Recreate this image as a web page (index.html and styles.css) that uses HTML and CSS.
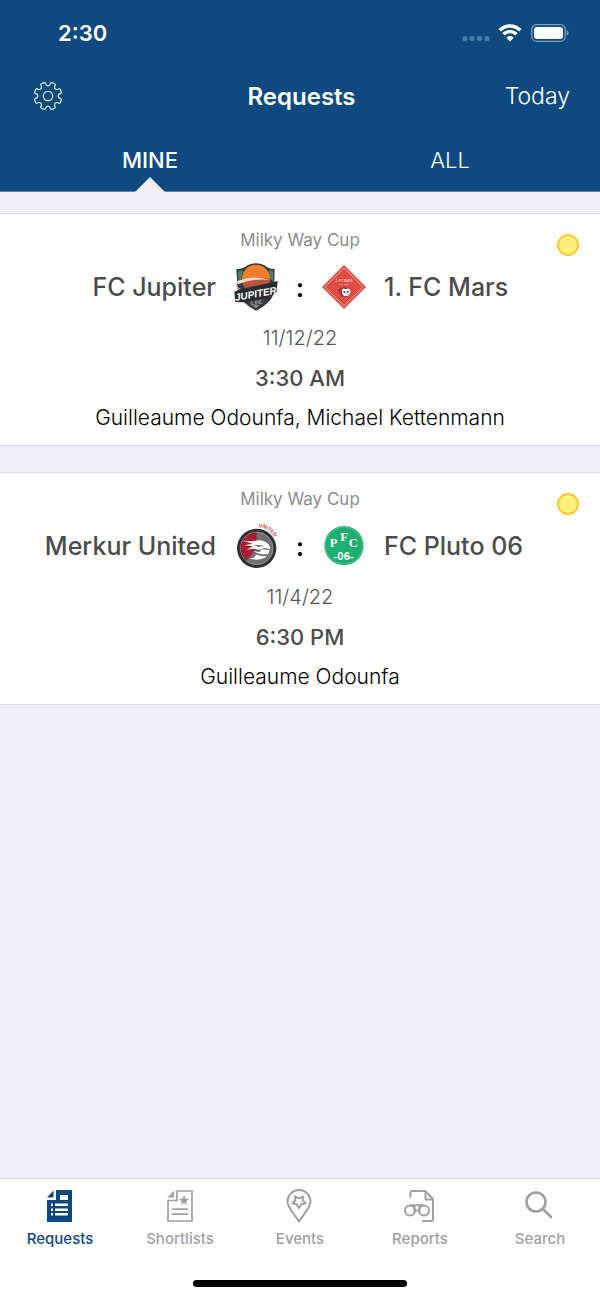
FILE: index.html
```html
<!DOCTYPE html>
<html lang="en">
<head>
<meta charset="UTF-8" />
<meta name="viewport" content="width=device-width, initial-scale=1.0"/>
<title>Requests</title>
<link rel="stylesheet" href="styles.css">
</head>
<body>
<header class="header">
  <div class="status-bar">
    <span class="clock">2:30</span>
    <div class="status-icons">
      <svg class="signal" width="28" height="20" viewBox="0 0 28 20" fill="#4d7aa6">
        <circle cx="3" cy="15.500" r="2.600"/><circle cx="10" cy="15.500" r="2.600"/><circle cx="17.500" cy="15.500" r="2.600"/><circle cx="25" cy="15.500" r="2.600"/>
      </svg>
      <svg class="wifi" width="24" height="20" viewBox="0 0 24 20" fill="none" stroke="#fff" stroke-width="3.400">
        <path d="M1.700 7.300C7.500 1.500 16.500 1.500 22.300 7.300"/>
        <path d="M5.500 11.300C9.200 7.700 14.800 7.700 18.500 11.300"/>
        <path d="M8.300 14.700C10.400 12.400 13.600 12.400 15.700 14.700L12 18.600Z" fill="#fff" stroke="none"/>
      </svg>
      <svg class="battery" width="38" height="20" viewBox="0 0 38 20">
        <rect x="0.700" y="1.700" width="33.600" height="16.600" rx="5" fill="none" stroke="#7c9dbe" stroke-width="1.300"/>
        <rect x="3" y="4" width="29" height="12" rx="3" fill="#fff"/>
        <path d="M35.700 7.200Q37.600 8 37.600 10T35.700 12.800Z" fill="#7c9dbe"/>
      </svg>
    </div>
  </div>

  <div class="nav-bar">
    <button type="button" class="settings" aria-label="Settings">
      <svg width="30" height="30" viewBox="-15 -15 30 30" fill="none" stroke="#e3f0fb" stroke-width="1.200" stroke-linecap="round">
        <defs><path id="tooth" d="M-2.600 -12.600Q-1.600 -10 0 -10Q1.600 -10 2.600 -12.600Q3.100 -13.700 4.200 -13.300L6.400 -12.400Q7.500 -11.900 7.070 -10.750"/></defs>
        <use href="#tooth"/>
        <use href="#tooth" transform="rotate(45)"/>
        <use href="#tooth" transform="rotate(90)"/>
        <use href="#tooth" transform="rotate(135)"/>
        <use href="#tooth" transform="rotate(180)"/>
        <use href="#tooth" transform="rotate(225)"/>
        <use href="#tooth" transform="rotate(270)"/>
        <use href="#tooth" transform="rotate(315)"/>
        <circle r="4.700"/>
      </svg>
    </button>
    <h1>Requests</h1>
    <button type="button" class="today">Today</button>
  </div>

  <div class="tabs">
    <button type="button" class="tab active">MINE</button>
    <button type="button" class="tab">ALL</button>
  </div>
</header>

<main class="matches">
  <article class="match">
    <span class="dot"></span>
    <p class="cup">Milky Way Cup</p>
    <div class="teams">
      <h2 class="home">FC Jupiter</h2>
      <svg class="logo" viewBox="0 0 132 144">
        <path d="M7 18Q24 20 40 7Q66 -6 92 7Q106 20 122 18L120 92Q106 124 66 143Q28 124 12 92Z" fill="#34383a"/>
        <path d="M12 24L27 22L22 52L12 60ZM104 20L118 24V56L108 48Z" fill="#4f7b66"/>
        <circle cx="66" cy="47" r="42" fill="#ee7d2c"/>
        <path d="M25 52Q64 40 107 47Q107 66 98 74L38 80Q27 66 25 52Z" fill="#b9533f"/>
        <path d="M8 55Q60 34 107 51Q60 44 12 64Z" fill="#f2ddd3"/>
        <path d="M6 61Q14 84 40 80L34 87Q8 90 6 61Z" fill="#9a9a9a"/>
        <path d="M1 86L20 78L110 59L131 54L127 91L109 94L100 106L30 118L4 117Z" fill="#292b2d"/>
        <text x="65" y="103" transform="rotate(-10 65 90)" class="jupiter-name">JUPITER</text>
        <path d="M38 115L96 106Q92 124 66 138Q44 128 38 115Z" fill="#3d3f42"/>
        <text x="67" y="125" transform="rotate(-8 67 120)" class="jupiter-cup">1.FC</text>
        <path d="M56 128L77 125L66 135Z" fill="#999"/>
      </svg>
      <span class="versus">:</span>
      <svg class="logo" viewBox="0 0 132 144">
        <path d="M66 6L132 72L66 138L0 72Z" fill="#d9534a"/>
        <path d="M66 15L123 72L66 129L9 72Z" fill="#dd4b43" stroke="#f1aca0" stroke-width="2.500"/>
        <text x="66" y="56" class="mars-name">1. FC MARS</text>
        <text x="66" y="65" class="mars-year">EST. 1900</text>
        <path d="M48 79L68 72L77 99Q61 106 54 92Z" fill="#a92e2b"/>
        <circle cx="71" cy="87" r="13" fill="#6b2c2b"/>
        <path d="M60 80Q65 74 71 79Q78 73 84 80Q87 87 83 93L78 99H66L61 93Q58 87 60 80Z" fill="#fff"/>
        <circle cx="67" cy="87" r="3" fill="#443131"/><circle cx="77" cy="86" r="3" fill="#443131"/>
        <path d="M70 94L72 90L75 94Z" fill="#443131"/>
      </svg>
      <h2 class="away">1. FC Mars</h2>
    </div>
    <p class="date">11/12/22</p>
    <p class="time">3:30 AM</p>
    <p class="people">Guilleaume Odounfa, Michael Kettenmann</p>
  </article>

  <article class="match">
    <span class="dot"></span>
    <p class="cup">Milky Way Cup</p>
    <div class="teams">
      <h2 class="home">Merkur United</h2>
      <svg class="logo" viewBox="0 0 132 144">
        <defs><path id="united-arc" d="M73 15Q103 17 122 46"/></defs>
        <circle cx="68" cy="79" r="59" fill="#303033"/>
        <circle cx="68" cy="79" r="49" fill="#707074" stroke="#aaa" stroke-width="2"/>
        <path d="M68 31A48 48 0 0 0 37 116L68 79Z" fill="#a51f36"/>
        <path d="M27 56L58 58Q84 49 104 67L110 81L90 78L78 83L58 80L38 83L57 73L31 70L56 65Z" fill="#fff"/>
        <path d="M57 87L77 90L84 82L107 84L102 97L83 97L72 94Z" fill="#fff"/>
        <path d="M66 98L82 102L99 103Q86 113 68 113L46 111L61 106Z" fill="#fff"/>
        <path d="M60 68L92 71L73 76Z" fill="#707074"/>
        <text class="united-name"><textPath href="#united-arc">UNITED</textPath></text>
      </svg>
      <span class="versus">:</span>
      <svg class="logo" viewBox="0 0 132 144">
        <circle cx="66" cy="71" r="59" fill="#22b577"/>
        <circle cx="66" cy="71" r="55" fill="#20ad70" stroke="#62c99d" stroke-width="2"/>
        <text x="35" y="76" class="pluto-letter">P</text>
        <text x="66" y="58" class="pluto-letter">F</text>
        <text x="94" y="76" class="pluto-letter">C</text>
        <text x="65" y="113" class="pluto-year">-06-</text>
      </svg>
      <h2 class="away">FC Pluto 06</h2>
    </div>
    <p class="date">11/4/22</p>
    <p class="time">6:30 PM</p>
    <p class="people">Guilleaume Odounfa</p>
  </article>
</main>

<footer class="footer">
  <nav class="tab-bar">
    <a href="#requests" class="item active">
      <svg width="36" height="36" viewBox="0 0 36 36" fill="currentColor">
        <path fill-rule="evenodd" d="M14 2H30V34H5V12H14ZM18 7V12H26V7ZM9 15.500V18H11V15.500ZM13 15.500V18H26V15.500ZM9 20.500V23H11V20.500ZM13 20.500V23H26V20.500ZM9 25V27.500H11V25ZM13 25V27.500H26V25Z"/>
        <path d="M11.500 2.500V9.500H5Z"/>
      </svg>
      <span>Requests</span>
    </a>
    <a href="#shortlists" class="item">
      <svg width="36" height="36" viewBox="0 0 36 36" fill="none" stroke="currentColor" stroke-width="1.700">
        <path d="M15 3H30V33H6V12.500H15Z"/>
        <path d="M12 2.500V9.500H5.500Z" fill="currentColor" stroke="none"/>
        <path d="M22 7L23.400 10.800L27 11L24.200 13.400L25.200 17L22 15L18.800 17L19.800 13.400L17 11L20.600 10.800Z" fill="currentColor" stroke="none"/>
        <path d="M10 21.200H26M10 26.200H26"/>
      </svg>
      <span>Shortlists</span>
    </a>
    <a href="#events" class="item">
      <svg width="36" height="36" viewBox="0 0 36 36" fill="none" stroke="currentColor" stroke-width="2" stroke-linejoin="round">
        <path d="M17 33.500C13.500 27.500 5.500 20 5.500 13.500A11.500 11.500 0 0 1 28.500 13.500C28.500 20 20.500 27.500 17 33.500Z"/>
        <path d="M13 8.500L17 10.300L21 8.500L20.700 12.600L23.600 15.200L19.500 16.200L17 20L14.500 16.200L10.400 15.200L13.300 12.600Z"/>
      </svg>
      <span>Events</span>
    </a>
    <a href="#reports" class="item">
      <svg width="36" height="36" viewBox="0 0 36 36" fill="none" stroke="currentColor" stroke-width="2" stroke-linejoin="round" stroke-linecap="round">
        <path d="M8.500 9V4.500Q8.500 3 10 3H23L31 11V31Q31 33 29 33H21"/>
        <path d="M23.500 3.500V11.500H30.500"/>
        <circle cx="8" cy="22.500" r="5"/><circle cx="22" cy="22.500" r="5"/>
        <path d="M8.500 17.500Q10.500 16.500 12.500 18Q15 15.500 17.500 18Q19.500 16.500 21.500 17.500M12.500 18V24M17.500 18V24M13 22.500H17"/>
      </svg>
      <span>Reports</span>
    </a>
    <a href="#search" class="item">
      <svg width="36" height="36" viewBox="0 0 36 36" fill="none" stroke="currentColor" stroke-width="2.600" stroke-linecap="round">
        <circle cx="14" cy="14" r="9.500"/>
        <path d="M21 21L29 29"/>
      </svg>
      <span>Search</span>
    </a>
  </nav>
  <div class="home-indicator"></div>
</footer>
</body>
</html>
```

FILE: styles.css
```css
* { margin: 0; padding: 0; box-sizing: border-box; }
body {
  min-height: 100vh;
  display: flex;
  flex-direction: column;
  background: #f0eff5;
  color: #000;
  font-family: Inter, "Liberation Sans", sans-serif;
}
button {
  border: none;
  background: none;
  color: inherit;
  font-family: inherit;
  cursor: pointer;
}
svg { display: block; }

/* header */
.header {
  background: #0e4a80;
  color: #fff;
  border-bottom: 1px solid #4c86b8;
}
.status-bar {
  height: 66px;
  padding: 0 31px 0 58px;
  display: flex;
  align-items: center;
  justify-content: space-between;
}
.clock { font-size: 22px; font-weight: 600; }
.status-icons { display: flex; align-items: center; }
.signal { margin-right: 8px; }
.wifi { margin-right: 9px; }

.nav-bar {
  height: 60px;
  padding: 0 30px 0 33px;
  display: grid;
  grid-template-columns: 1fr auto 1fr;
  align-items: center;
}
.settings { justify-self: start; }
.nav-bar h1 { font-size: 24px; font-weight: 600; }
.today { justify-self: end; font-size: 23px; font-weight: 300; }

.tabs { display: grid; grid-template-columns: 1fr 1fr; }
.tab {
  position: relative;
  height: 65px;
  padding-top: 2px;
  font-size: 22px;
  font-weight: 300;
}
.tab.active { font-weight: 500; }
.tab.active::after {
  content: "";
  position: absolute;
  left: 50%;
  bottom: -1px;
  margin-left: -15px;
  border: 15px solid transparent;
  border-top: none;
  border-bottom-color: #f0eff5;
}

/* matches */
.matches {
  flex: 1;
  padding-top: 21px;
  display: flex;
  flex-direction: column;
  gap: 26px;
}
.match {
  position: relative;
  padding: 14px 16px 13px;
  background: #fff;
  border-top: 1px solid #dcdce1;
  border-bottom: 1px solid #dcdce1;
  text-align: center;
}
.dot {
  position: absolute;
  top: 20px;
  right: 21px;
  width: 22px;
  height: 22px;
  border: 2px solid #fac934;
  border-radius: 50%;
  background: #fff07e;
}
.cup { color: #8c8c8c; font-size: 17px; font-weight: 400; line-height: 24px; }
.teams {
  display: grid;
  grid-template-columns: 1fr 44px 44px 44px 1fr;
  align-items: center;
  margin: 11px 0 13px;
}
.teams h2 { color: #4c4c4c; font-size: 25px; font-weight: 500; }
.home { padding-right: 18px; text-align: right; }
.away { padding-left: 18px; text-align: left; }
.logo { width: 44px; height: 48px; }
.versus { font-size: 26px; font-weight: 600; }
.date { color: #555; font-size: 20px; font-weight: 300; line-height: 28px; }
.time { margin: 12px 0; color: #4c4c4c; font-size: 22px; font-weight: 500; line-height: 28px; }
.people { font-size: 21px; font-weight: 300; line-height: 28px; }

/* club logos */
.logo text { fill: #fff; text-anchor: middle; font-family: "Liberation Sans", sans-serif; font-weight: bold; }
.logo .jupiter-name { font-size: 30px; font-style: italic; }
.logo .jupiter-cup { fill: #bbb; font-size: 16px; }
.logo .mars-name { font-size: 9px; fill: #f6c9be; }
.logo .mars-year { font-size: 6px; fill: #f6c9be; }
.logo .united-name { fill: #dc3b55; font-size: 16px; text-anchor: start; }
.logo .pluto-letter { font-family: "Liberation Serif", serif; font-size: 38px; }
.logo .pluto-year { font-size: 34px; }

/* bottom bar */
.footer {
  height: 121px;
  padding-bottom: 12px;
  display: flex;
  flex-direction: column;
  justify-content: space-between;
  align-items: center;
  background: #fff;
  border-top: 1px solid #dadadc;
}
.tab-bar {
  width: 100%;
  padding-top: 9px;
  display: grid;
  grid-template-columns: repeat(5, 1fr);
}
.item {
  display: flex;
  flex-direction: column;
  align-items: center;
  gap: 5px;
  color: #a0a0a0;
  font-size: 15px;
  font-weight: 500;
  line-height: 20px;
  text-decoration: none;
}
.item.active { color: #0e4a80; }
.home-indicator {
  width: 214px;
  height: 7px;
  border-radius: 4px;
  background: #000;
}
```
